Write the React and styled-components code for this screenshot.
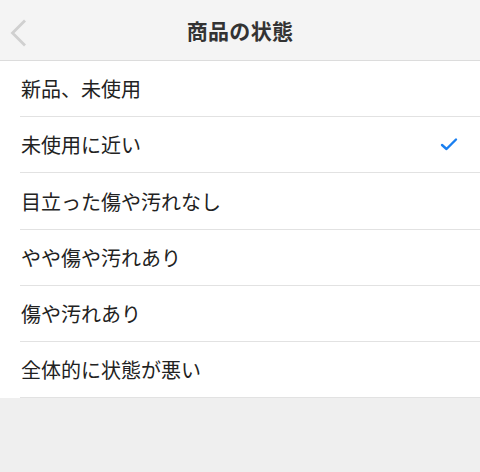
import React, { useState } from "react";
import styled, { createGlobalStyle } from "styled-components";

const GlobalStyle = createGlobalStyle`
  html, body {
    margin: 0;
    padding: 0;
    background: #efefef;
  }
  body {
    font-family: "Noto Sans CJK JP", "Noto Sans", sans-serif;
  }
`;

const Page = styled.div`
  width: 480px;
  min-height: 472px;
  background: #efefef;
`;

const NavBar = styled.div`
  display: grid;
  grid-template-columns: 60px 1fr 60px;
  align-items: center;
  height: 60px;
  background: #f4f4f4;
  border-bottom: 1px solid #dcdcdc;
`;

const BackButton = styled.button`
  display: flex;
  align-items: center;
  justify-content: flex-start;
  height: 60px;
  padding: 5px 0 0 10px;
  border: none;
  background: none;
  cursor: pointer;
`;

const Title = styled.h1`
  margin: 0;
  text-align: center;
  font-size: 21px;
  font-weight: 700;
  color: #333;
  letter-spacing: 0.3px;
`;

const List = styled.ul`
  list-style: none;
  margin: 0;
  padding: 0 0 0 20px;
  background: #fff;
`;

const Item = styled.li`
  display: flex;
  align-items: center;
  justify-content: space-between;
  height: 55px;
  padding: 0 20px 0 1px;
  border-bottom: 1px solid #e2e2e2;
  font-size: 20px;
  color: #222;
  cursor: pointer;

  &:nth-child(3) {
    height: 56px;
  }
`;

const conditions = [
  "新品、未使用",
  "未使用に近い",
  "目立った傷や汚れなし",
  "やや傷や汚れあり",
  "傷や汚れあり",
  "全体的に状態が悪い",
];

function Check() {
  return (
    <svg width="20" height="16" viewBox="0 0 20 16">
      <path
        d="M2 8 L6.5 12 L16 2.5"
        fill="none"
        stroke="#1a7ff0"
        strokeWidth="2.4"
        strokeLinecap="round"
        strokeLinejoin="round"
      />
    </svg>
  );
}

function Chevron() {
  return (
    <svg width="20" height="40" viewBox="0 0 20 40">
      <path
        d="M15 7.5 L2.5 20 L15 32.5"
        fill="none"
        stroke="#d0d0d0"
        strokeWidth="2.8"
      />
    </svg>
  );
}

export default function App() {
  const [selected, setSelected] = useState(1);
  return (
    <Page>
      <GlobalStyle />
      <NavBar>
        <BackButton aria-label="戻る">
          <Chevron />
        </BackButton>
        <Title>商品の状態</Title>
        <div />
      </NavBar>
      <List>
        {conditions.map((c, i) => (
          <Item key={c} onClick={() => setSelected(i)}>
            <span>{c}</span>
            {selected === i && <Check />}
          </Item>
        ))}
      </List>
    </Page>
  );
}
